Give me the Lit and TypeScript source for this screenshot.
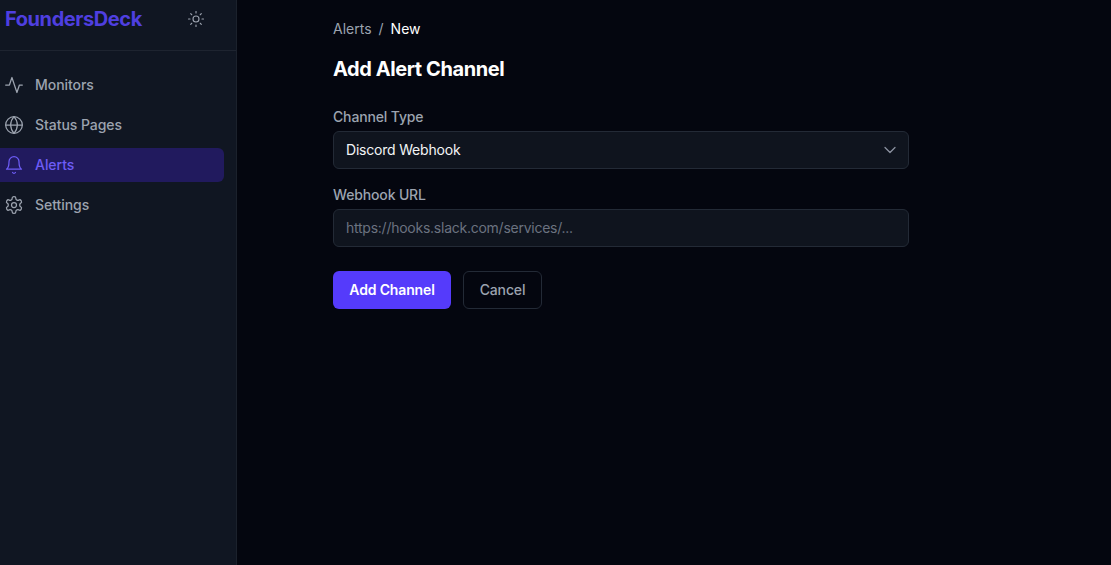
import { LitElement, html, css, svg } from 'lit';
import { customElement } from 'lit/decorators.js';

const icon = (body: unknown, size = 20) => html`<svg
  width=${size} height=${size} viewBox="0 0 24 24" fill="none"
  stroke="currentColor" stroke-width="1.5" stroke-linecap="round" stroke-linejoin="round"
>${body}</svg>`;

const navItems = [
  { label: 'Monitors', body: svg`<path d="M22 12h-3.5l-3 9-6-18-3 9H2"/>` },
  {
    label: 'Status Pages',
    body: svg`<circle cx="12" cy="12" r="10"/><path d="M2 12h20"/><path d="M12 2a15.3 15.3 0 0 1 4 10 15.3 15.3 0 0 1-4 10 15.3 15.3 0 0 1-4-10 15.3 15.3 0 0 1 4-10z"/>`,
  },
  {
    label: 'Alerts',
    active: true,
    body: svg`<path d="M6 8a6 6 0 0 1 12 0c0 7 3 9 3 9H3s3-2 3-9"/><path d="M10.3 21a1.94 1.94 0 0 0 3.4 0"/>`,
  },
  {
    label: 'Settings',
    body: svg`<path d="M12.22 2h-.44a2 2 0 0 0-2 2v.18a2 2 0 0 1-1 1.73l-.43.25a2 2 0 0 1-2 0l-.15-.08a2 2 0 0 0-2.73.73l-.22.38a2 2 0 0 0 .73 2.73l.15.1a2 2 0 0 1 1 1.72v.51a2 2 0 0 1-1 1.74l-.15.09a2 2 0 0 0-.73 2.73l.22.38a2 2 0 0 0 2.73.73l.15-.08a2 2 0 0 1 2 0l.43.25a2 2 0 0 1 1 1.73V20a2 2 0 0 0 2 2h.44a2 2 0 0 0 2-2v-.18a2 2 0 0 1 1-1.73l.43-.25a2 2 0 0 1 2 0l.15.08a2 2 0 0 0 2.73-.73l.22-.39a2 2 0 0 0-.73-2.73l-.15-.08a2 2 0 0 1-1-1.74v-.5a2 2 0 0 1 1-1.74l.15-.09a2 2 0 0 0 .73-2.73l-.22-.38a2 2 0 0 0-2.73-.73l-.15.08a2 2 0 0 1-2 0l-.43-.25a2 2 0 0 1-1-1.73V4a2 2 0 0 0-2-2z"/><circle cx="12" cy="12" r="3"/>`,
  },
];

const sunIcon = svg`<circle cx="12" cy="12" r="4"/><path d="M12 2v2"/><path d="M12 20v2"/><path d="m4.93 4.93 1.41 1.41"/><path d="m17.66 17.66 1.41 1.41"/><path d="M2 12h2"/><path d="M20 12h2"/><path d="m6.34 17.66-1.41 1.41"/><path d="m19.07 4.93-1.41 1.41"/>`;

@customElement('app-root')
export class AppRoot extends LitElement {
  static styles = css`
    :host {
      display: flex;
      height: 565px;
      overflow: hidden;
      background: #04060f;
      color: #fff;
      font-family: Inter, 'Liberation Sans', sans-serif;
      font-size: 14px;
    }

    .sidebar {
      width: 236px;
      flex: none;
      background: #101622;
      border-right: 1px solid #1b212c;
    }

    .brand {
      height: 50px;
      display: flex;
      align-items: center;
      justify-content: space-between;
      padding: 0 31px 0 5px;
      border-bottom: 1px solid #1e2430;
    }

    .logo {
      font-size: 20px;
      font-weight: 700;
      letter-spacing: -0.42px;
      color: #4f3fe0;
      margin-top: -12px;
    }

    .sun {
      display: flex;
      color: #9ca3af;
      margin-top: -13px;
    }

    nav {
      display: flex;
      flex-direction: column;
      gap: 6px;
      padding: 17px 12px 0 0;
    }

    .item {
      height: 34px;
      display: flex;
      align-items: center;
      gap: 11px;
      padding-left: 4px;
      border-radius: 0 6px 6px 0;
      color: #9ca3af;
      font-weight: 500;
      letter-spacing: -0.05px;
    }

    .item span {
      margin-bottom: 2px;
    }

    .item.active {
      background: #211a5e;
      color: #6d5cf6;
    }

    main {
      flex: 1;
      padding: 20px 0 0 96px;
    }

    .crumbs {
      display: flex;
      gap: 7px;
      height: 18px;
      line-height: 18px;
      color: #9ca3af;
    }

    .crumbs .current {
      color: #fff;
    }

    h1 {
      margin: 17px 0 24px;
      font-size: 20px;
      line-height: 28px;
      font-weight: 700;
      letter-spacing: -0.42px;
    }

    form {
      width: 576px;
      display: flex;
      flex-direction: column;
    }

    label {
      display: block;
      height: 20px;
      line-height: 20px;
      margin-bottom: 4px;
      color: #9ca3af;
      font-weight: 500;
      letter-spacing: -0.15px;
    }

    .field {
      position: relative;
      margin-bottom: 16px;
    }

    select,
    input {
      display: block;
      width: 100%;
      height: 38px;
      box-sizing: border-box;
      padding: 0 12px 2px;
      background: #0f141e;
      border: 1px solid #232a36;
      border-radius: 6px;
      font-family: inherit;
      font-size: 14px;
      outline: none;
    }

    select {
      appearance: none;
      color: #f3f4f6;
      letter-spacing: -0.2px;
    }

    input {
      letter-spacing: -0.25px;
    }

    input::placeholder {
      color: #6b7280;
      opacity: 1;
    }

    .chevron {
      position: absolute;
      right: 9px;
      bottom: 9px;
      display: flex;
      color: #8b92a0;
      pointer-events: none;
    }

    .actions {
      display: flex;
      gap: 12px;
      margin-top: 8px;
    }

    button {
      height: 38px;
      box-sizing: border-box;
      padding: 0 0 2px;
      border-radius: 6px;
      font-family: inherit;
      font-size: 14px;
      font-weight: 600;
      letter-spacing: -0.15px;
    }

    .primary {
      width: 118px;
      background: #553bfb;
      border: none;
      color: #fff;
    }

    .secondary {
      width: 79px;
      background: transparent;
      border: 1px solid #232a36;
      color: #9ca3af;
      font-weight: 500;
    }
  `;

  render() {
    return html`
      <aside class="sidebar">
        <div class="brand">
          <span class="logo">FoundersDeck</span>
          <span class="sun">${icon(sunIcon, 18)}</span>
        </div>
        <nav>
          ${navItems.map(
            (item) => html`<div class="item ${item.active ? 'active' : ''}">
              ${icon(item.body)}<span>${item.label}</span>
            </div>`
          )}
        </nav>
      </aside>
      <main>
        <div class="crumbs">
          <span>Alerts</span><span>/</span><span class="current">New</span>
        </div>
        <h1>Add Alert Channel</h1>
        <form @submit=${(e: Event) => e.preventDefault()}>
          <div class="field">
            <label for="type">Channel Type</label>
            <select id="type">
              <option>Discord Webhook</option>
              <option>Slack Webhook</option>
            </select>
            <span class="chevron">${icon(svg`<path d="m6 9 6 6 6-6"/>`)}</span>
          </div>
          <div class="field">
            <label for="url">Webhook URL</label>
            <input id="url" type="text" placeholder="https://hooks.slack.com/services/..." />
          </div>
          <div class="actions">
            <button class="primary" type="submit">Add Channel</button>
            <button class="secondary" type="button">Cancel</button>
          </div>
        </form>
      </main>
    `;
  }
}
